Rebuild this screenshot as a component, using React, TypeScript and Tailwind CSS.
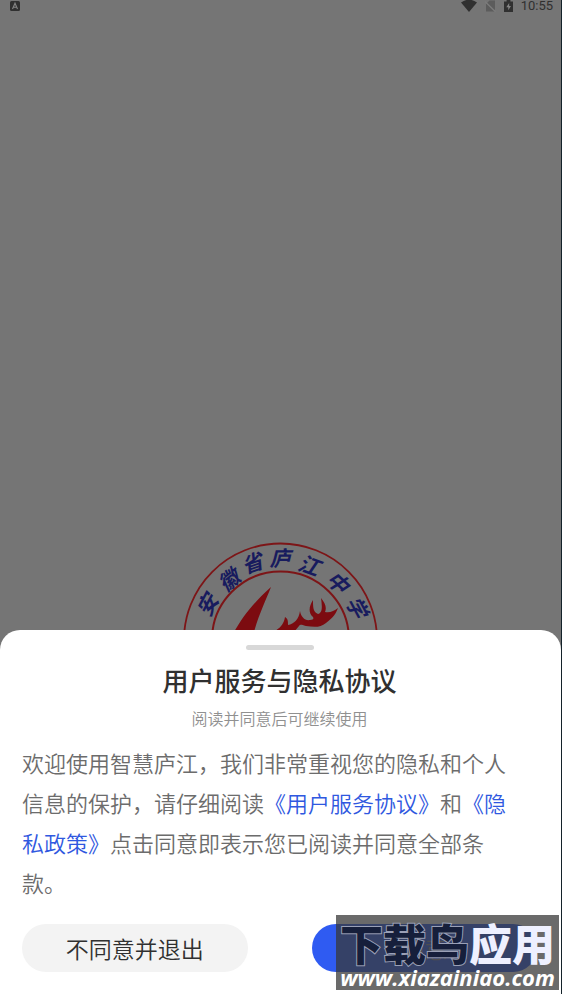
import React, { useState } from 'react';

const EMBLEM_CHARS = [
  { char: '安', x: 26, y: 65, angle: -62 },
  { char: '徽', x: 48, y: 40, angle: -39 },
  { char: '省', x: 71, y: 23, angle: -19 },
  { char: '庐', x: 99, y: 18, angle: 0 },
  { char: '江', x: 128, y: 25, angle: 20 },
  { char: '中', x: 157, y: 42, angle: 43 },
  { char: '学', x: 176, y: 67, angle: 62 },
];

const StatusBar: React.FC = () => (
  <header className="flex h-3 items-center justify-between pl-[9px] pr-2 text-[#303030]">
    <svg width="12" height="12" viewBox="0 0 12 12" aria-label="输入法">
      <rect x="1" y="1" width="10" height="10" rx="1.5" fill="currentColor" />
      <path d="M3.5 9 6 3.2 8.5 9M4.4 7.2h3.2" fill="none" stroke="#858585" strokeWidth="1.1" />
    </svg>
    <div className="flex items-center gap-2">
      <svg width="16" height="12" viewBox="0 0 16 12" aria-label="无线网络">
        <path d="M0 2.4Q8-3 16 2.4L8 12Z" fill="currentColor" />
      </svg>
      <svg width="11" height="12" viewBox="0 0 11 12" aria-label="无信号">
        <path d="M1 4 4.5.5H10V11.5H1Z" fill="#5c5c5c" />
        <path d="M0 1.5 10.5 11.8" stroke="#7c7c7c" strokeWidth="1.3" />
      </svg>
      <svg width="9" height="12" viewBox="0 0 8 12" aria-label="充电中" preserveAspectRatio="none">
        <path d="M0 1.4H2.3V0H5.7V1.4H8V12H0Z" fill="currentColor" />
        <path d="M4.6 3 2 7.2H3.8V10.2L6.2 6H4.6Z" fill="#858585" />
      </svg>
      <time className="font-[Roboto,sans-serif] text-[13px] leading-4">10:55</time>
    </div>
  </header>
);

const Emblem: React.FC = () => (
  <div className="h-[90px] w-[200px] overflow-hidden">
    <svg width="200" height="200" viewBox="0 0 200 200" role="img" aria-label="安徽省庐江中学">
      <circle cx="99.5" cy="100" r="96.5" fill="none" stroke="#7d1517" strokeWidth="1.8" />
      <circle cx="99.5" cy="100" r="68.5" fill="none" stroke="#7d1517" strokeWidth="2" />
      <g
        fill="#181b5e"
        fontSize="21"
        fontWeight="700"
        fontStyle="italic"
        textAnchor="middle"
        className="font-['Noto_Sans_CJK_SC',sans-serif]"
      >
        {EMBLEM_CHARS.map(({ char, x, y, angle }) => (
          <text key={char} x={x} y={y} dy="8" transform={`rotate(${angle} ${x} ${y})`}>
            {char}
          </text>
        ))}
      </g>
      <path
        d="M53 92C61 78 70 65 90 47C85 60 78 74 73 92Z
           M94 91C99 88 103 84 104 77C107 79 107 81 107 85C113 84 118 79 119 71C120 77 124 81 129 80
           C132 80 133 79 132 77C127 73 128 66 132 60C132 67 132 72 137 74C142 73 141 65 140 58
           C144 63 146 67 144 72C149 73 153 71 157 68C154 76 150 79 145 83
           C139 88 133 87 125 86C120 85 120 84 118 86L113 92H94Z"
        fill="#7c0b10"
      />
    </svg>
  </div>
);

const Watermark: React.FC = () => (
  <div className="pointer-events-none absolute bottom-1 right-0.5 flex h-[75px] w-[223px] flex-col items-center whitespace-nowrap bg-[#383838]/75 pt-0.5 font-['Noto_Sans_CJK_SC',sans-serif]">
    <p className="text-[43px] font-black leading-[50px]">
      <span className="text-[#161f3b] [paint-order:stroke_fill] [-webkit-text-stroke:2px_#9aa0b6]">下载鸟</span>
      <span className="text-[#eef0ff]">应用</span>
    </p>
    <p className="font-['Open_Sans',sans-serif] text-[22px] font-bold italic leading-5 text-white">
      www.xiazainiao.com
    </p>
  </div>
);

interface ConsentSheetProps {
  onAnswer: (agreed: boolean) => void;
}

const ConsentSheet: React.FC<ConsentSheetProps> = ({ onAnswer }) => (
  <section
    aria-labelledby="consent-title"
    className="relative rounded-t-[20px] bg-white pb-[22px] pl-[22px] pr-6 pt-[15px]"
  >
    <div className="mx-auto h-[5px] w-[68px] rounded-full bg-[#d8d8d8]" />
    <h1 id="consent-title" className="mt-3 text-center text-[26px] font-medium leading-9 text-[#303030]">
      用户服务与隐私协议
    </h1>
    <p className="mt-2 text-center text-base font-[350] leading-6 text-[#909090]">阅读并同意后可继续使用</p>
    <p className="mt-3 pr-3 text-[22px] font-[350] leading-10 text-[#6c6c6c]">
      欢迎使用智慧庐江，我们非常重视您的隐私和个人信息的保护，请仔细阅读
      <a href="#terms" className="text-[#2f58e0]">《用户服务协议》</a>和
      <a href="#privacy" className="text-[#2f58e0]">《隐私政策》</a>
      点击同意即表示您已阅读并同意全部条款。
    </p>
    <div className="mt-[22px] flex justify-between gap-16 text-[23px] font-[350]">
      <button
        type="button"
        onClick={() => onAnswer(false)}
        className="h-12 flex-1 rounded-full bg-[#f3f3f3] text-[#303030]"
      >
        不同意并退出
      </button>
      <button
        type="button"
        onClick={() => onAnswer(true)}
        className="h-12 flex-1 rounded-full bg-[#2f5bf2] text-[#8a8a96]"
      >
        同意
      </button>
    </div>
    <Watermark />
  </section>
);

export default function App() {
  const [answer, setAnswer] = useState<boolean | null>(null);

  return (
    <div className="flex min-h-screen flex-col border-r border-[#14222a] bg-[#757575] font-['Noto_Sans_CJK_SC',sans-serif]">
      <StatusBar />
      <main className="flex flex-1 flex-col">
        <div className="flex flex-1 items-end justify-center">
          <Emblem />
        </div>
        {answer === null && <ConsentSheet onAnswer={setAnswer} />}
      </main>
    </div>
  );
}
